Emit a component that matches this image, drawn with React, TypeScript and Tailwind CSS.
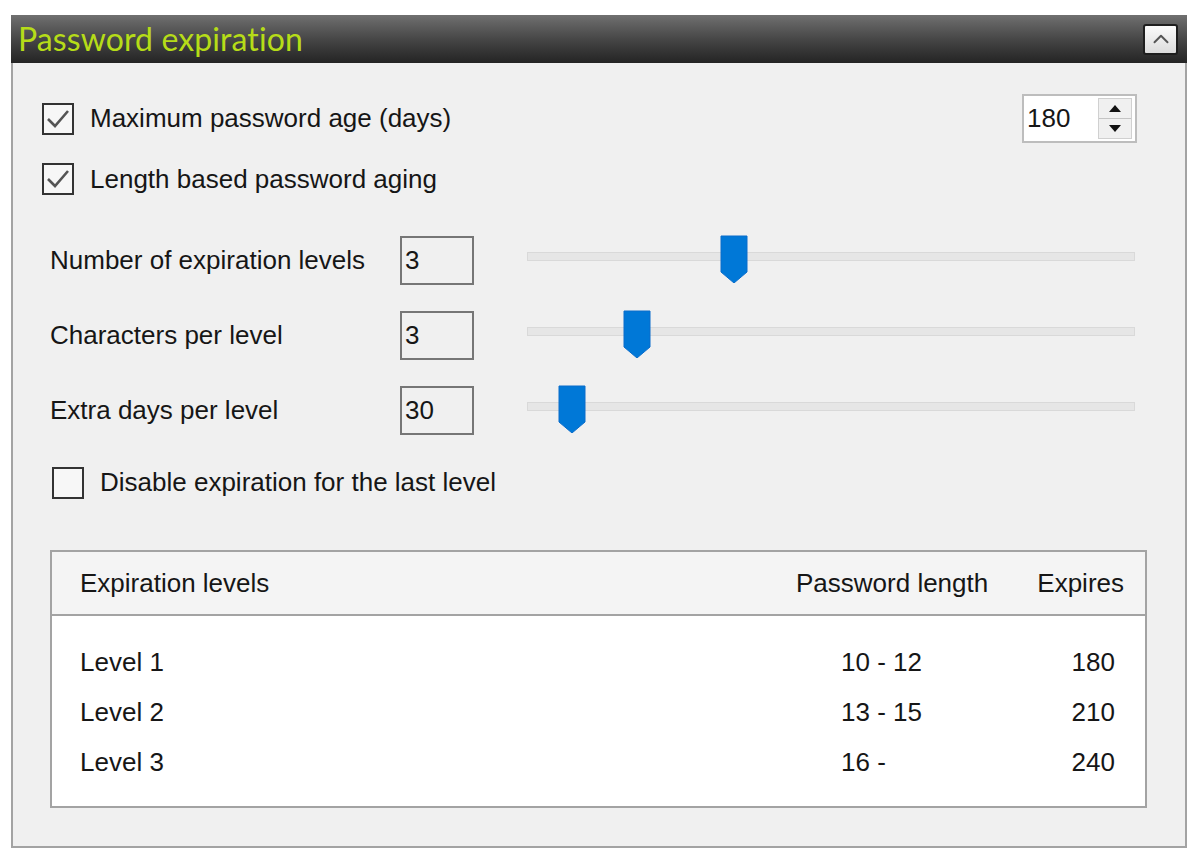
import { ChevronUp } from 'lucide-react';

const sliders = [
  { label: 'Number of expiration levels', value: '3', thumb: 193 },
  { label: 'Characters per level', value: '3', thumb: 96 },
  { label: 'Extra days per level', value: '30', thumb: 31 },
];

const levels = [
  { name: 'Level 1', length: '10 - 12', expires: '180' },
  { name: 'Level 2', length: '13 - 15', expires: '210' },
  { name: 'Level 3', length: '16 -', expires: '240' },
];

function CheckBox({ checked }: { checked: boolean }) {
  return (
    <div className="w-8 h-8 shrink-0 border-2 border-[#333333] bg-[#f7f7f7] flex items-center justify-center">
      {checked && (
        <svg width="26" height="26" viewBox="0 0 26 26">
          <polyline points="3,13 10,20 23,5" fill="none" stroke="#555555" strokeWidth="2.6" />
        </svg>
      )}
    </div>
  );
}

function Thumb() {
  return (
    <svg width="28" height="48" viewBox="0 0 28 48">
      <path d="M1 1 H27 V37 L14 48 L1 37 Z" fill="#0078d7" stroke="#0a6ccb" strokeWidth="1" />
    </svg>
  );
}

export default function App() {
  return (
    <div className="w-[1200px] h-[867px] bg-white pt-[15px] pl-[11px] text-[#161616] font-['Liberation_Sans',Arial,sans-serif] text-[26px]">
      <div className="w-[1176px] h-[833px] flex flex-col">
        {/* Header */}
        <div className="h-[48px] shrink-0 flex items-center justify-between pl-[7px] pr-[9px] bg-gradient-to-b from-[#707070] via-[#474747] to-[#242424]">
          <span className="text-[32px] leading-none text-[#b6dc18] font-['Lato','Liberation_Sans',sans-serif] tracking-[0.1px]">Password expiration</span>
          <button className="w-[35px] h-[31px] rounded-[3px] border-2 border-[#1e1e1e] bg-gradient-to-b from-[#fbfbfb] to-[#dcdcdc] flex items-center justify-center">
            <ChevronUp size={26} strokeWidth={1.8} className="text-[#555555]" />
          </button>
        </div>

        {/* Body */}
        <div className="flex-1 flex flex-col bg-[#f0f0f0] border-x-2 border-b-2 border-[#a3a3a3]">
          {/* Max password age */}
          <div className="mt-[31px] h-[49px] flex items-center justify-between pl-[29px] pr-[48px]">
            <div className="flex items-center gap-[16px]">
              <CheckBox checked />
              <span>Maximum password age (days)</span>
            </div>
            <div className="w-[115px] h-[49px] border-2 border-[#bdbdbd] bg-white flex items-center">
              <span className="flex-1 pl-[3px]">180</span>
              <div className="w-[34px] h-[41px] mr-[3px] flex flex-col border border-[#d0d0d0] bg-[#f0f0f0]">
                <div className="flex-1 flex items-center justify-center border-b border-[#c4c4c4]">
                  <svg width="12" height="7" viewBox="0 0 12 7"><path d="M6 0 L12 7 H0 Z" fill="#111" /></svg>
                </div>
                <div className="flex-1 flex items-center justify-center">
                  <svg width="12" height="7" viewBox="0 0 12 7"><path d="M0 0 H12 L6 7 Z" fill="#111" /></svg>
                </div>
              </div>
            </div>
          </div>

          {/* Length based aging */}
          <div className="mt-[20px] h-[32px] flex items-center gap-[16px] pl-[29px]">
            <CheckBox checked />
            <span>Length based password aging</span>
          </div>

          {/* Sliders */}
          <div className="mt-[41px] flex flex-col gap-[26px]">
            {sliders.map((s) => (
              <div key={s.label} className="h-[49px] flex items-center pl-[37px]">
                <span className="w-[350px] shrink-0">{s.label}</span>
                <div className="w-[74px] h-[49px] shrink-0 border-2 border-[#767676] bg-[#f0f0f0] flex items-center pl-[3px]">
                  {s.value}
                </div>
                <div className="ml-[53px] w-[608px] h-[49px] relative">
                  <div className="absolute left-0 right-0 top-[16px] h-[9px] bg-[#e6e6e6] border border-[#d9d9d9]" />
                  <div className="absolute top-[-1px]" style={{ left: s.thumb }}>
                    <Thumb />
                  </div>
                </div>
              </div>
            ))}
          </div>

          {/* Disable expiration */}
          <div className="mt-[31px] h-[33px] flex items-center gap-[16px] pl-[39px]">
            <CheckBox checked={false} />
            <span>Disable expiration for the last level</span>
          </div>

          {/* Expiration levels list */}
          <div className="mt-[51px] ml-[37px] w-[1097px] h-[258px] border-2 border-[#a3a3a3] bg-white flex flex-col">
            <div className="h-[64px] shrink-0 flex items-center bg-[#f4f4f4] border-b-2 border-[#a3a3a3] pl-[28px]">
              <span className="flex-1">Expiration levels</span>
              <span className="w-[234px]">Password length</span>
              <span className="w-[94px] text-right mr-[21px]">Expires</span>
            </div>
            <div className="pt-[21px] flex flex-col">
              {levels.map((l) => (
                <div key={l.name} className="h-[50px] flex items-center pl-[28px]">
                  <span className="flex-1">{l.name}</span>
                  <span className="w-[234px] pl-[45px]">{l.length}</span>
                  <span className="w-[94px] text-right mr-[21px] pr-[9px]">{l.expires}</span>
                </div>
              ))}
            </div>
          </div>
        </div>
      </div>
    </div>
  );
}
